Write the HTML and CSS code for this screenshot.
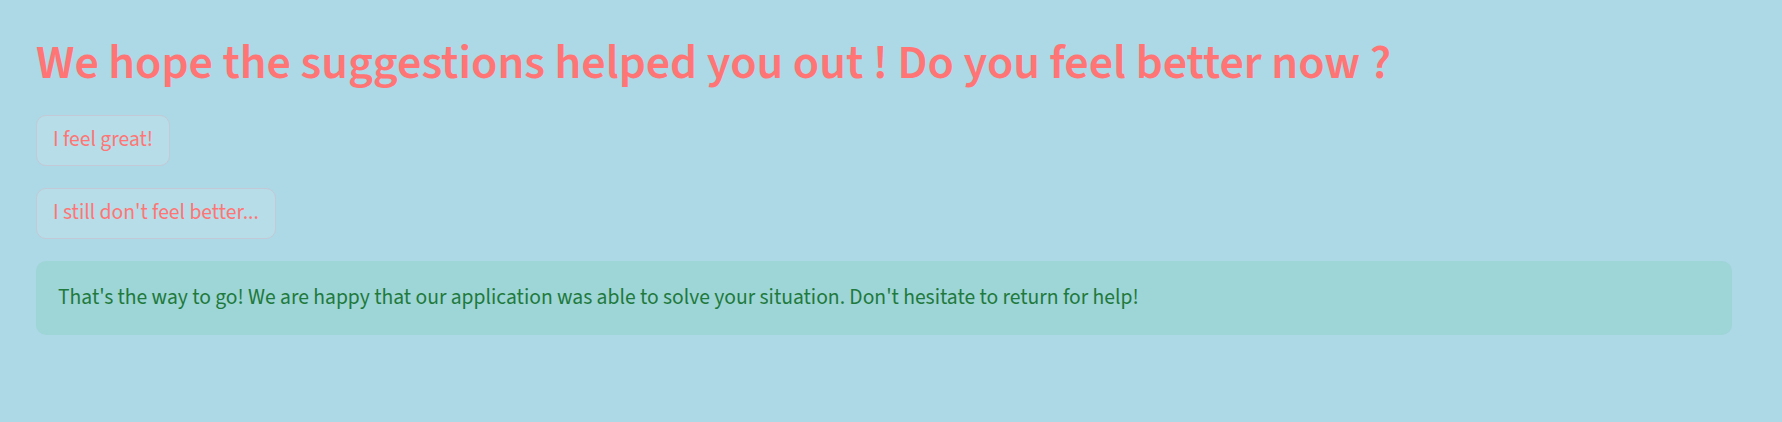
FILE: index.html
```html
<!DOCTYPE html>
<html lang="en">
<head>
<meta charset="utf-8">
<title>Feedback</title>
<link rel="stylesheet" href="styles.css">
</head>
<body>
<main class="page">
  <h1 class="title">We hope the suggestions helped you out ! Do you feel better now ?</h1>
  <div class="row"><button class="btn" type="button">I feel great!</button></div>
  <div class="row"><button class="btn" type="button">I still don't feel better...</button></div>
  <div class="alert">That's the way to go! We are happy that our application was able to solve your situation. Don't hesitate to return for help!</div>
</main>
</body>
</html>
```
FILE: styles.css
```css
html, body {
  margin: 0;
  padding: 0;
  background: #add8e6;
}
body {
  font-family: "Source Sans 3", "Source Sans Pro", "Noto Sans", sans-serif;
  font-size: 21.6px;
  color: #ff7575;
  height: 422px;
  overflow: hidden;
}
.page {
  display: flex;
  flex-direction: column;
  gap: 22px;
  padding: 35px 50px 0 36px;
}
.title {
  margin: 0;
  font-size: 48px;
  font-weight: 600;
  line-height: 1.2;
  letter-spacing: 0;
  color: #ff7575;
  white-space: nowrap;
}
.row {
  display: flex;
}
.btn {
  font-family: inherit;
  font-size: 21.6px;
  line-height: 1.6;
  color: #ff7575;
  background: #b7dde8;
  border: 1px solid #c3c9d6;
  border-radius: 10px;
  padding: 7px 16px;
  min-height: 51px;
  cursor: pointer;
}
.alert {
  background: #9ed5d7;
  color: #1f7a3d;
  border-radius: 10px;
  padding: 20px 22px;
  line-height: 1.6;
}
```
